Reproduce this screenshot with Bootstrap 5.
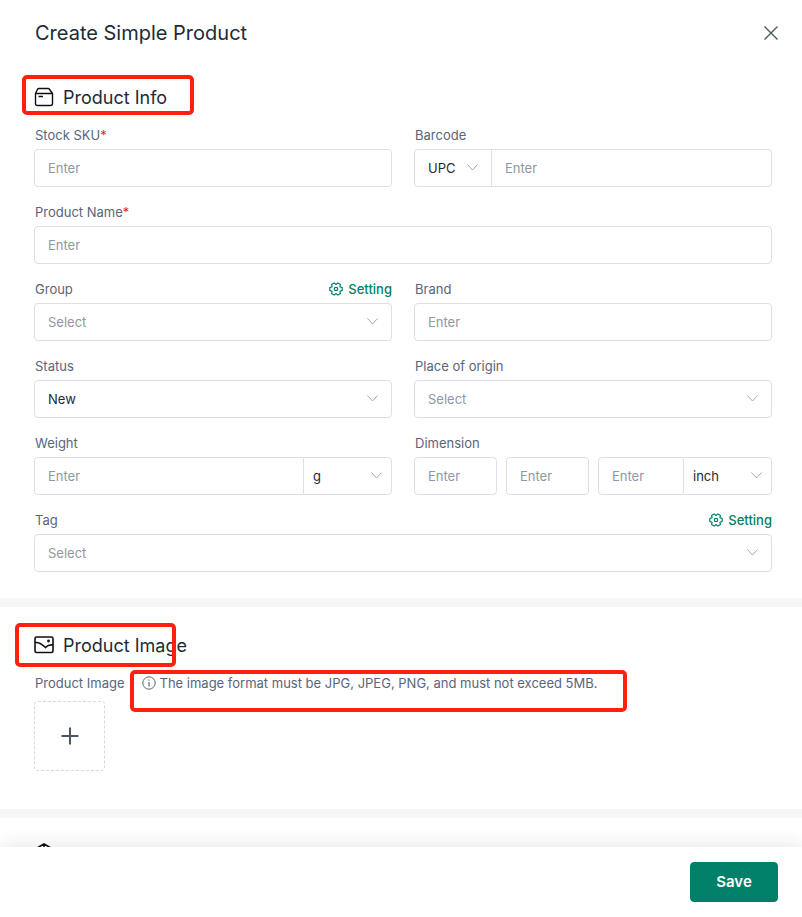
<!DOCTYPE html>
<html lang="en">
<head>
<meta charset="utf-8">
<meta name="viewport" content="width=device-width, initial-scale=1">
<title>Create Simple Product</title>
<link href="https://cdn.jsdelivr.net/npm/bootstrap@5.3.0/dist/css/bootstrap.min.css" rel="stylesheet">
<style>
:root { --ink: #232a35; --label: #596579; --hint: #8d97a5; --line: #dcdfe8; --brand: #008068; --note: #ff2010; }
body { font-family: Inter, "Liberation Sans", sans-serif; font-size: 13px; line-height: 20px; color: var(--ink); }
svg { display: block; fill: none; stroke: currentColor; flex: none; }
.drawer-head { padding: 18px 22px 18px 35px; }
.drawer-head h1 { font-size: 20px; line-height: 30px; font-weight: 400; }
.close-btn { color: #4c5666; width: 16px; }
.drawer-body { min-height: 0; overflow-y: auto; scrollbar-width: none; }
.drawer-body::-webkit-scrollbar { display: none; }
.panel { padding: 24px 30px 38px 34px; border-top: 9px solid #f6f7f9; }
.panel-first { padding-top: 17px; padding-bottom: 26px; border-top: 0; }
.panel-title { font-size: 18px; line-height: 30px; font-weight: 400; gap: 9px; margin-bottom: 12px; }
.panel-title svg { color: #111; margin-bottom: 3px; }
.form-grid { --bs-gutter-x: 22px; --bs-gutter-y: 15px; }
.form-label { color: var(--label); font-size: 13px; line-height: 20px; margin-bottom: 4px; padding-left: 1px; display: block; }
.req { color: #f5222d; }
.form-control, .form-select { height: 38px; font-size: 13px; line-height: 20px; padding: 8px 12px 8px 13px; border-color: var(--line); border-radius: 4px; color: var(--ink); }
.form-control::placeholder { color: var(--hint); opacity: 1; }
.form-select { padding-right: 32px; background-position: right 12px top 11px; background-size: 13px 13px;
  background-image: url("data:image/svg+xml,%3Csvg xmlns='http://www.w3.org/2000/svg' viewBox='0 0 13 13'%3E%3Cpath d='M1.500 3.500 6.500 9l5-5.500' fill='none' stroke='%23a3a7b0'/%3E%3C/svg%3E"); }
.form-select.is-empty { color: var(--hint); }
.input-group > .code-type { flex: 0 0 78px; padding-right: 0; }
.input-group > .unit { flex: 0 0 89px; padding-left: 9px; background-position: right 8px top 11px; }
.dims { gap: 9px; }
.dims > * { flex: 1 1 0; width: 0; }
.dims > .input-group { flex-basis: 118px; }
.setting { color: var(--brand); font-weight: 500; gap: 5px; margin-bottom: 4px; }
.setting:hover { color: #006e59; }
.hint { color: var(--label); gap: 4px; margin-left: 17px; }
.upload { width: 71px; height: 70px; border: 1px dashed #d5d9e2; border-radius: 4px; color: #4a5568; background: none; margin-top: 8px; }
.callout { position: absolute; border: 4px solid var(--note); border-radius: 5px; pointer-events: none; }
.callout-info { inset: -8px auto -2px -12px; width: 172px; }
.callout-image { inset: -8px auto -6px -19px; width: 161px; }
.callout-hint { inset: -3px -29px -19px -12px; }
.drawer-foot { padding: 15px 24px; box-shadow: 0 -4px 16px rgba(0,0,0,.08); position: relative; }
.save-btn { --bs-btn-bg: var(--brand); --bs-btn-color: #fff; --bs-btn-border-color: var(--brand); --bs-btn-hover-bg: #006e59; --bs-btn-hover-color: #fff; width: 88px; height: 40px; font-size: 15px; line-height: 20px; font-weight: 600; border-radius: 4px; }
</style>
</head>
<body class="vh-100 d-flex flex-column bg-white">
<svg class="d-none" aria-hidden="true">
  <symbol id="gear" viewBox="0 0 14 14"><path d="M13.200 5.600V8.400L10.900 9.200 11.400 11.600 8.900 13.100 7 11.500 5.100 13.100 2.600 11.600 3.100 9.200.8 8.400V5.600L3.100 4.800 2.600 2.400 5.100.9 7 2.500 8.900.9 11.400 2.400 10.900 4.800z" stroke-width="1.200" stroke-linejoin="round"/><circle cx="7" cy="7" r="1.700" stroke-width="1.300"/></symbol>
</svg>

<header class="drawer-head d-flex align-items-center justify-content-between">
  <h1 class="m-0">Create Simple Product</h1>
  <button type="button" class="close-btn btn p-0 border-0" aria-label="Close">
    <svg width="14" height="14" viewBox="0 0 14 14" stroke-width="1.4"><path d="M.5.5l13 13M13.500.5l-13 13"/></svg>
  </button>
</header>

<main class="drawer-body flex-grow-1">
  <section class="panel panel-first">
    <h2 class="panel-title d-flex align-items-center position-relative">
      <svg width="20" height="20" viewBox="0 0 20 20" stroke-width="1.4"><path d="M1.500 6.500 3.400 2.500Q3.900 1.500 4.900 1.500H14.100Q15.100 1.500 15.600 2.500L18.500 6.500V16.500Q18.500 18.500 16.500 18.500H3.500Q1.500 18.500 1.500 16.500zM1.500 6.500H18.500M4.500 9.500H9" stroke-linejoin="round"/></svg>
      Product Info
      <span class="callout callout-info"></span>
    </h2>
    <form class="row form-grid" id="product">
      <div class="col-6">
        <label class="form-label" for="sku">Stock SKU<span class="req">*</span></label>
        <input class="form-control" id="sku" placeholder="Enter">
      </div>
      <div class="col-6">
        <label class="form-label" for="barcode">Barcode</label>
        <div class="input-group">
          <select class="form-select code-type" aria-label="Barcode type"><option>UPC</option><option>EAN</option></select>
          <input class="form-control" id="barcode" placeholder="Enter">
        </div>
      </div>
      <div class="col-12">
        <label class="form-label" for="name">Product Name<span class="req">*</span></label>
        <input class="form-control" id="name" placeholder="Enter">
      </div>
      <div class="col-6">
        <div class="d-flex justify-content-between">
          <label class="form-label" for="group">Group</label>
          <a href="#" class="setting d-flex align-items-center text-decoration-none"><svg width="14" height="14"><use href="#gear"/></svg>Setting</a>
        </div>
        <select class="form-select is-empty" id="group"><option>Select</option></select>
      </div>
      <div class="col-6">
        <label class="form-label" for="brand">Brand</label>
        <input class="form-control" id="brand" placeholder="Enter">
      </div>
      <div class="col-6">
        <label class="form-label" for="status">Status</label>
        <select class="form-select" id="status"><option>New</option><option>Used</option></select>
      </div>
      <div class="col-6">
        <label class="form-label" for="origin">Place of origin</label>
        <select class="form-select is-empty" id="origin"><option>Select</option></select>
      </div>
      <div class="col-6">
        <label class="form-label" for="weight">Weight</label>
        <div class="input-group">
          <input class="form-control" id="weight" placeholder="Enter">
          <select class="form-select unit" aria-label="Weight unit"><option>g</option><option>kg</option></select>
        </div>
      </div>
      <div class="col-6">
        <label class="form-label" for="dim-l">Dimension</label>
        <div class="dims d-flex">
          <input class="form-control" id="dim-l" placeholder="Enter">
          <input class="form-control" aria-label="Width" placeholder="Enter">
          <div class="input-group">
            <input class="form-control" aria-label="Height" placeholder="Enter">
            <select class="form-select unit" aria-label="Dimension unit"><option>inch</option><option>cm</option></select>
          </div>
        </div>
      </div>
      <div class="col-12">
        <div class="d-flex justify-content-between">
          <label class="form-label" for="tag">Tag</label>
          <a href="#" class="setting d-flex align-items-center text-decoration-none"><svg width="14" height="14"><use href="#gear"/></svg>Setting</a>
        </div>
        <select class="form-select is-empty" id="tag"><option>Select</option></select>
      </div>
    </form>
  </section>

  <section class="panel">
    <h2 class="panel-title d-flex align-items-center position-relative">
      <svg width="20" height="20" viewBox="0 0 20 20" stroke-width="1.600"><rect x="1" y="2" width="18" height="15.500" rx="1.500"/><path d="M1 7.500C5 7 7.500 8.500 11.500 12.500Q14.500 9.300 19 10"/><circle cx="14.500" cy="6" r="1.400" fill="currentColor" stroke="none"/></svg>
      Product Image
      <span class="callout callout-image"></span>
    </h2>
    <div class="d-flex">
      <label class="form-label m-0" for="upload">Product Image</label>
      <div class="hint d-flex align-items-center position-relative">
        <svg width="14" height="14" viewBox="0 0 14 14"><circle cx="7" cy="7" r="6.200"/><path d="M7 6v4.500M7 3.500v1.300" stroke-width="1.200"/></svg>
        The image format must be JPG, JPEG, PNG, and must not exceed 5MB.
        <span class="callout callout-hint"></span>
      </div>
    </div>
    <button type="button" id="upload" class="upload d-flex align-items-center justify-content-center p-0" aria-label="Add image">
      <svg width="18" height="18" viewBox="0 0 18 18" stroke-width="2"><path d="M9 .5v17M.5 9h17"/></svg>
    </button>
  </section>

  <section class="panel">
    <h2 class="panel-title d-flex align-items-center">
      <svg width="20" height="24" viewBox="0 0 20 24" stroke-width="1.600"><path d="M10 1.500v9M3 6 10 2l7 4v11l-7 4-7-4zM3 6l7 4 7-4"/></svg>
    </h2>
  </section>
</main>

<footer class="drawer-foot d-flex justify-content-end bg-white">
  <button type="submit" form="product" class="save-btn btn p-0">Save</button>
</footer>
<script src="https://cdn.jsdelivr.net/npm/bootstrap@5.3.0/dist/js/bootstrap.bundle.min.js"></script>
</body>
</html>
